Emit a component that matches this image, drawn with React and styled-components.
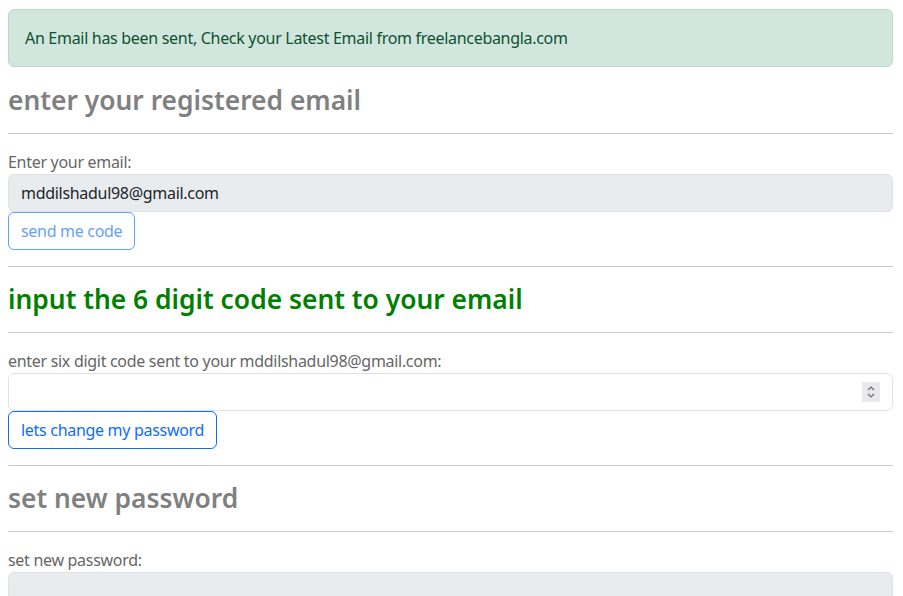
import React from 'react'
import styled, { createGlobalStyle } from 'styled-components';

const GlobalStyle = createGlobalStyle`
  body{
    margin: 0;
    font-family: "Noto Sans", "Open Sans", sans-serif;
    font-size: 16px;
    line-height: 1.5;
    letter-spacing: -0.3px;
    color: #212529;
    background: #fff;
  }
  *{
    box-sizing: border-box;
  }
`;

const sections = [
  {
    title: "enter your registered email",
    color: "#808080",
    label: "Enter your email:",
    type: "email",
    value: "mddilshadul98@gmail.com",
    filled: true,
    button: "send me code",
    disabled: true
  },
  {
    title: "input the 6 digit code sent to your email",
    color: "#008000",
    label: "enter six digit code sent to your mddilshadul98@gmail.com:",
    type: "number",
    value: "",
    filled: false,
    spinner: true,
    button: "lets change my password",
    disabled: false
  },
  {
    title: "set new password",
    color: "#808080",
    label: "set new password:",
    type: "password",
    value: "",
    filled: true
  }
]

const Spinner = () => (
  <Spin>
    <svg width="10" height="16" viewBox="0 0 10 16" fill="none" stroke="#6b6b6b" strokeWidth="1.1">
      <path d="M2 6 L5 3 L8 6" />
      <path d="M2 10 L5 13 L8 10" />
    </svg>
  </Spin>
)

const App = () => {
  return (
    <Page>
      <GlobalStyle />
      <Alert>An Email has been sent, Check your Latest Email from freelancebangla.com</Alert>
      {
        sections.map(({title, color, label, type, value, filled, spinner, button, disabled}, index) => {
          return(
            <Section key={index}>
              {index > 0 && <Rule />}
              <Heading color={color}>{title}</Heading>
              <Rule />
              <Label>{label}</Label>
              <Field>
                <Input type={type} defaultValue={value} filled={filled} readOnly={filled} />
                {spinner && <Spinner />}
              </Field>
              {button && <Button disabled={disabled}>{button}</Button>}
            </Section>
          )
        })
      }
    </Page>
  );
}

const Page = styled.div`
  padding: 9px 10px 0 8px;
  height: 596px;
  overflow: hidden;
`;

const Alert = styled.div`
  background-color: #d1e7dd;
  border: 1px solid #badbcc;
  color: #0f5132;
  border-radius: 6px;
  padding: 16px;
  margin-bottom: 17px;
`;

const Section = styled.section`
  display: flex;
  flex-direction: column;
  align-items: flex-start;
`;

const Heading = styled.h3`
  margin: 0;
  font-size: 26.4px;
  font-weight: 580;
  line-height: 33px;
  letter-spacing: 0;
  color: ${p => p.color};
`;

const Rule = styled.hr`
  align-self: stretch;
  margin: 16px 0;
  border: 0;
  border-top: 1px solid rgba(33, 37, 41, 0.25);
`;

const Label = styled.label`
  color: #666;
  line-height: 24px;
`;

const Field = styled.div`
  position: relative;
  align-self: stretch;
  display: flex;
`;

const Input = styled.input`
  flex: 1;
  height: 38px;
  padding: 6px 12px;
  font-family: inherit;
  font-size: 16px;
  letter-spacing: -0.3px;
  color: #212529;
  background-color: ${p => p.filled ? '#e9ecef' : '#fff'};
  border: 1px solid #dee2e6;
  border-radius: 6px;
  outline: none;
  &::-webkit-inner-spin-button,
  &::-webkit-outer-spin-button{
    -webkit-appearance: none;
    margin: 0;
  }
`;

const Spin = styled.span`
  position: absolute;
  right: 13px;
  top: 9px;
  width: 18px;
  height: 20px;
  background: #e9e9ed;
  display: flex;
  align-items: center;
  justify-content: center;
`;

const Button = styled.button`
  height: 38px;
  padding: 6px 12px;
  font-family: inherit;
  font-size: 16px;
  letter-spacing: -0.3px;
  color: #0d6efd;
  background: transparent;
  border: 1px solid #0d6efd;
  border-radius: 6px;
  opacity: ${p => p.disabled ? 0.65 : 1};
`;

export default App;
